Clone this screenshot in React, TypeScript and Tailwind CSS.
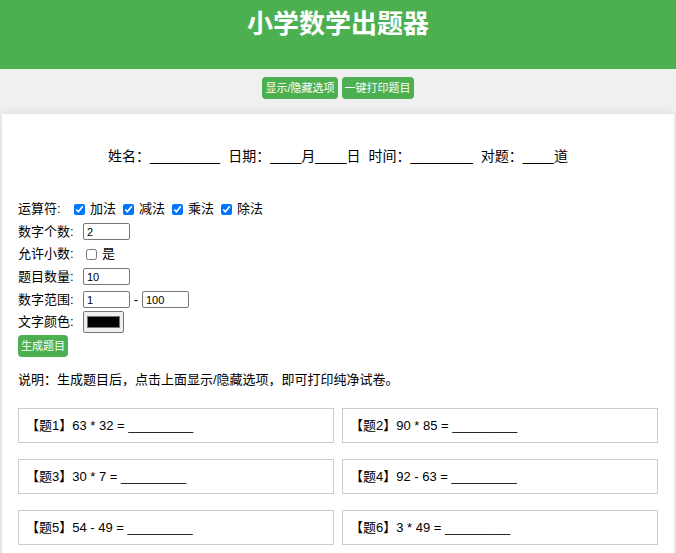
import { useState } from "react";
import type { ReactNode } from "react";

const operators = ["加法", "减法", "乘法", "除法"];

const questions = ["63 * 32", "90 * 85", "30 * 7", "92 - 63", "54 - 49", "3 * 49"];

const fields = ["姓名：_________", "日期：____月____日", "时间：________", "对题：____道"];

function Button({ children, onClick }: { children: ReactNode; onClick?: () => void }) {
  return (
    <button
      type="button"
      onClick={onClick}
      className="rounded bg-[#4caf50] px-[3px] py-[3px] text-[11px] leading-4 text-white"
    >
      {children}
    </button>
  );
}

function NumberBox({ id, value, label }: { id: string; value: string; label?: string }) {
  return (
    <input
      id={id}
      type="text"
      inputMode="numeric"
      defaultValue={value}
      aria-label={label}
      className="h-[17px] w-[47px] rounded-xs border border-[#767676] bg-white px-[3px] text-[11px] leading-3"
    />
  );
}

export default function App() {
  const [open, setOpen] = useState(true);

  return (
    <div className="min-h-screen bg-[#f0f0f0] font-['Liberation_Sans','Noto_Sans_CJK_SC',sans-serif] text-[13px] leading-5 text-black">
      <header className="bg-[#4caf50] pt-2 pb-[29px] text-center text-white">
        <h1 className="text-[26px] leading-8 font-bold">小学数学出题器</h1>
      </header>

      <div className="flex justify-center gap-1 pt-2 pb-[15px]">
        <Button onClick={() => setOpen(!open)}>显示/隐藏选项</Button>
        <Button onClick={() => window.print()}>一键打印题目</Button>
      </div>

      <main className="mx-[2px] bg-white px-4 pt-8 pb-4 shadow-[0_0_10px_rgba(0,0,0,0.1)]">
        <div className="flex justify-center gap-2 text-[14px] whitespace-nowrap">
          {fields.map((field) => (
            <span key={field}>{field}</span>
          ))}
        </div>

        {open && (
          <form className="pt-8">
            <div className="flex h-[22px] items-center">
              <span className="w-14">运算符:</span>
              <div className="flex gap-[7px]">
                {operators.map((name) => (
                  <label key={name} className="flex items-center gap-[5px]">
                    <input type="checkbox" defaultChecked className="size-[11px]" />
                    {name}
                  </label>
                ))}
              </div>
            </div>
            <div className="flex h-[23px] items-center">
              <label htmlFor="count" className="w-[65px]">数字个数:</label>
              <NumberBox id="count" value="2" />
            </div>
            <div className="flex h-[22px] items-center">
              <span className="w-[68px]">允许小数:</span>
              <label className="flex items-center gap-[5px]">
                <input type="checkbox" className="size-[11px]" />是
              </label>
            </div>
            <div className="flex h-[23px] items-center">
              <label htmlFor="total" className="w-[65px]">题目数量:</label>
              <NumberBox id="total" value="10" />
            </div>
            <div className="flex h-[23px] items-center">
              <label htmlFor="min" className="w-[65px]">数字范围:</label>
              <NumberBox id="min" value="1" />
              <span className="w-3 text-center">-</span>
              <NumberBox id="max" value="100" label="最大值" />
            </div>
            <div className="flex h-[22px] items-center">
              <label htmlFor="color" className="w-[65px]">文字颜色:</label>
              <input
                id="color"
                type="color"
                defaultValue="#000000"
                className="h-[22px] w-[41px] rounded-xs border border-[#767676] bg-[#efefef] px-[1px] py-0"
              />
            </div>
            <div className="flex pt-[2px]">
              <Button>生成题目</Button>
            </div>
          </form>
        )}

        <p className="pt-[13px]">说明：生成题目后，点击上面显示/隐藏选项，即可打印纯净试卷。</p>

        <div className="grid grid-cols-2 gap-x-2 gap-y-4 pt-[18px]">
          {questions.map((question, i) => (
            <div key={question} className="border border-[#cccccc] px-[7px] py-[7px] leading-[19px]">
              【题{i + 1}】{question} = _________
            </div>
          ))}
        </div>
      </main>
    </div>
  );
}
